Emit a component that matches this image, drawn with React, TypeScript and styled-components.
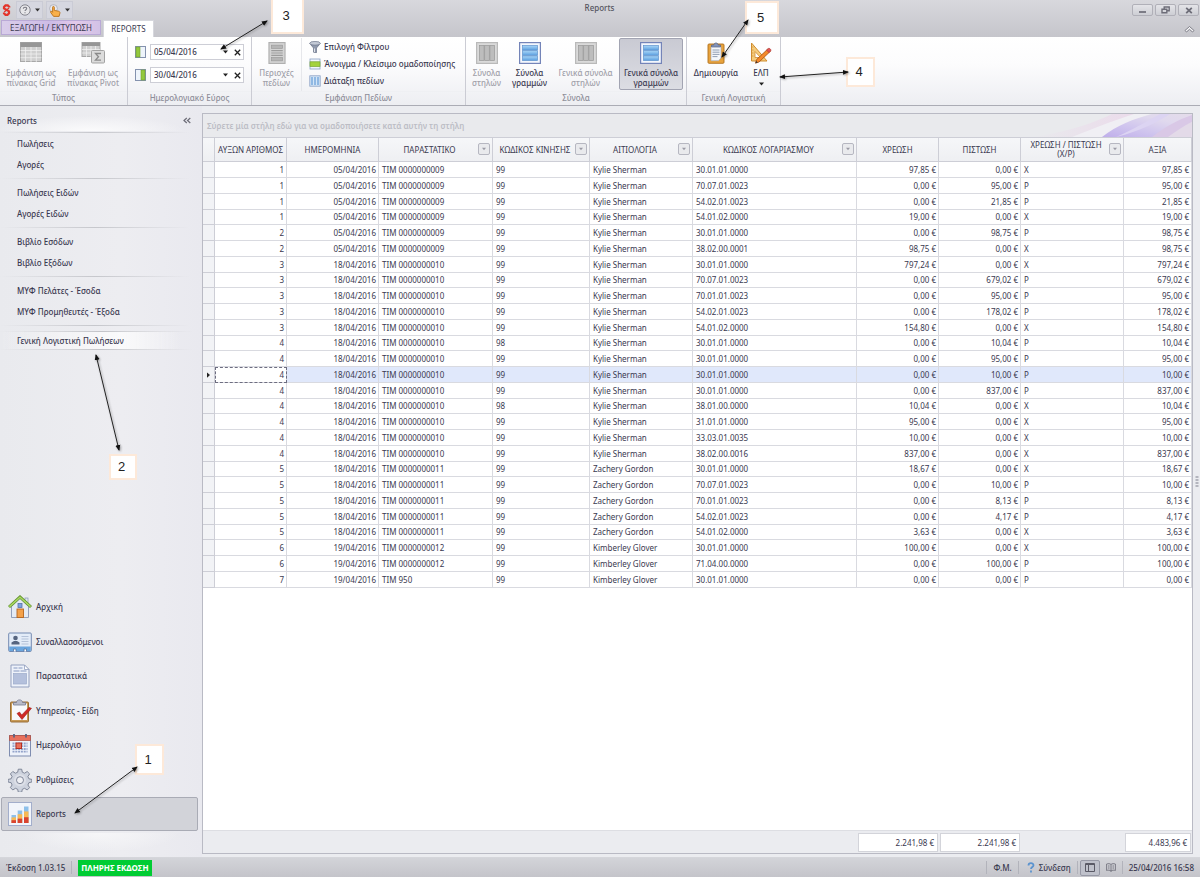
import React from 'react';
import styled, { createGlobalStyle, css } from 'styled-components';

const GlobalStyle = createGlobalStyle`
  *, *::before, *::after { box-sizing: border-box; }
  body {
    margin: 0;
    background: #ebecf0;
    color: #3a3950;
    font: 8px/10px "Noto Sans", "Open Sans", sans-serif;
  }
  button, input { font: inherit; color: inherit; }
  button { padding: 0; border: 0; background: none; cursor: pointer; }
  a { color: inherit; text-decoration: none; }
`;

/* ---------- frame ---------- */

const Page = styled.div`
  position: relative;
  display: flex;
  flex-direction: column;
  min-height: 100vh;
  overflow: hidden;
`;

const Header = styled.header`
  height: 37px;
  background: linear-gradient(#d8d8dd, #c5c5cb);
`;

const TitleBar = styled.div`
  display: grid;
  grid-template-columns: 1fr auto 1fr;
  align-items: center;
  height: 20px;
  padding: 0 1px 0 0;
`;

const QuickAccess = styled.div`
  display: flex;
  align-items: center;
  gap: 3px;
`;

const QuickButton = styled.button`
  display: flex;
  align-items: center;
  justify-content: center;
  gap: 4px;
  width: 27px;
  height: 18px;
  border: 1px solid #cacbd5;
  background: #d6d7e0;
`;

const Title = styled.h1`
  margin: 0;
  padding-bottom: 4px;
  font-size: 8px;
  font-weight: 500;
  color: #55555f;
`;

const WindowButtons = styled.div`
  display: flex;
  justify-content: flex-end;
  gap: 2px;
`;

const WindowButton = styled.button`
  display: grid;
  place-items: center;
  width: 21px;
  height: 12px;
  border: 1px solid #b0b0b8;
  border-radius: 2px;
  background: linear-gradient(#e4e4e8, #cdced4);
`;

const TabRow = styled.div`
  display: flex;
  align-items: flex-start;
  gap: 2px;
  height: 17px;
  padding: 0 4px 0 1px;
`;

const Tab = styled.button<{ $active?: boolean }>`
  height: 15px;
  width: 100px;
  font-size: 8px;
  border: 1px solid #b9a9d6;
  background: linear-gradient(90deg, #d9cdea, #cdbbe6 50%, #e3c9ea 75%, #d2c2e6);
  ${(p) =>
    p.$active &&
    css`
      width: 51px;
      height: 17px;
      border-color: #d6d7dd;
      border-bottom: 0;
      background: #fff;
    `}
`;

const CollapseRibbon = styled.button`
  margin: 5px 1px 0 auto;
  line-height: 0;
`;

/* ---------- ribbon ---------- */

const Ribbon = styled.div`
  display: flex;
  height: 69px;
  border-bottom: 1px solid #abacb5;
  background: linear-gradient(#fff, #fcfcfd 40%, #edeef2);
  font-weight: 500;
`;

const GroupBox = styled.section<{ $width: number }>`
  display: flex;
  flex-direction: column;
  width: ${(p) => p.$width}px;
  border-right: 1px solid #cbccd4;
`;

const GroupBody = styled.div`
  display: flex;
  flex: 1;
  padding-top: 1px;
`;

const GroupCaption = styled.h2`
  margin: 0;
  height: 14px;
  border-top: 1px solid #eff0f3;
  font-size: 8px;
  line-height: 12px;
  font-weight: 500;
  text-align: center;
  color: #8e8e99;
`;

const LargeButton = styled.button<{ $width: number; $active?: boolean }>`
  display: flex;
  flex-direction: column;
  align-items: center;
  gap: 4px;
  width: ${(p) => p.$width}px;
  height: 52px;
  padding-top: 3px;
  white-space: pre-line;
  border: 1px solid transparent;
  border-radius: 2px;
  &:disabled { color: #a0a0a9; cursor: default; }
  ${(p) =>
    p.$active &&
    css`
      border-color: #a2a4b2;
      background: linear-gradient(#c9cad3, #dcdde3);
    `}
`;

const DateFields = styled.div`
  display: flex;
  flex-direction: column;
  gap: 7px;
  padding: 6px 0 0 7px;
`;

const DateRow = styled.div`
  display: flex;
  align-items: center;
  gap: 4px;
  height: 16px;
`;

const DateBox = styled.div`
  display: flex;
  align-items: center;
  width: 94px;
  height: 16px;
  border: 1px solid #cdced6;
  background: #fff;
`;

const DateInput = styled.input`
  flex: 1;
  min-width: 0;
  padding: 0 0 0 3px;
  border: 0;
  outline: 0;
  background: none;
`;

const TinyButton = styled.button`
  display: grid;
  place-items: center;
  width: 12px;
  height: 14px;
`;

const CommandList = styled.div`
  display: flex;
  flex-direction: column;
  padding: 0 0 0 7px;
  border-left: 1px solid #e6e7eb;
`;

const Command = styled.button`
  display: flex;
  align-items: center;
  gap: 3px;
  height: 17px;
  white-space: nowrap;
`;

/* ---------- body ---------- */

const Workspace = styled.div`
  display: flex;
  flex: 1;
`;

const Sidebar = styled.aside`
  display: flex;
  flex-direction: column;
  width: 202px;
  padding: 7px 0 0;
  background: linear-gradient(90deg, #e9eaee, #ededf1 60%, #e9e9ef);
  font-weight: 500;
`;

const SidebarHeader = styled.div`
  display: flex;
  align-items: center;
  justify-content: space-between;
  height: 18px;
  padding: 0 11px 2px 7px;
  background: radial-gradient(ellipse at 45% 100%, #fbfbfc, transparent 60%);
`;

const SidebarTitle = styled.h2`
  margin: 0;
  font-size: 8px;
  font-weight: 500;
`;

const FadeRule = styled.hr<{ $slim?: boolean }>`
  width: 190px;
  height: ${(p) => (p.$slim ? 2 : 7)}px;
  margin: 0;
  border: 0;
  background: linear-gradient(90deg, transparent, #c6c7cc 50%, transparent) 0 50% / 100% 1px no-repeat;
`;

const ReportLink = styled.a<{ $active?: boolean }>`
  display: flex;
  align-items: center;
  height: 21px;
  padding-left: 17px;
  ${(p) =>
    p.$active &&
    css`
      height: 19px;
      margin-top: 2px;
      background: linear-gradient(90deg, transparent, #fafafb 60%, transparent 90%);
      border-top: 1px solid;
      border-bottom: 1px solid;
      border-image: linear-gradient(90deg, transparent, #c3c4c9 50%, transparent 95%) 1;
    `}
`;

const MainNav = styled.nav`
  display: flex;
  flex-direction: column;
  justify-content: space-between;
  height: 241px;
  margin: auto 4px 2px 1px;
`;

const NavItem = styled.a<{ $active?: boolean }>`
  display: flex;
  align-items: center;
  gap: 4px;
  height: 34px;
  padding-left: 6px;
  border: 1px solid transparent;
  border-radius: 2px;
  ${(p) =>
    p.$active &&
    css`
      border-color: #a9abb5;
      background: #d2d3d9;
    `}
`;

const SidebarFooter = styled.div`
  height: 24px;
  background: radial-gradient(ellipse at 50% 0, #f6f6f8, transparent 55%);
`;

const GridPanel = styled.main`
  display: flex;
  flex-direction: column;
  flex: 1;
  min-width: 0;
  margin: 7px 0 3px;
  border: 1px solid #b9bac4;
  background: #fff;
`;

const GroupByBar = styled.div`
  display: flex;
  align-items: center;
  justify-content: space-between;
  height: 23px;
  padding-left: 4px;
  background: #e9eaed;
  color: #bcbdc5;
  font-weight: 600;
`;

const Ribbons = styled.svg`
  width: 180px;
  height: 23px;
`;

const Table = styled.table`
  width: 100%;
  table-layout: fixed;
  border-collapse: separate;
  border-spacing: 0;
`;

const HeadRow = styled.tr`
  height: 25px;
  background: linear-gradient(#f6f7f9, #eeeff2);
`;

const HeadCell = styled.th`
  padding: 0 2px 1px;
  border: solid #cdced6;
  border-width: 1px 1px 1px 0;
  font-weight: 400;
  line-height: 9px;
`;

const HeadContent = styled.div`
  display: flex;
  align-items: center;
`;

const HeadLabel = styled.span`
  flex: 1;
  white-space: pre-line;
`;

const FilterButton = styled.button`
  display: grid;
  place-items: center;
  flex: none;
  width: 12px;
  height: 12px;
  border: 1px solid #b6b7c1;
  border-radius: 2px;
  background: #e9eaed;
`;

const Row = styled.tr<{ $selected?: boolean }>`
  height: 16px;
  &:nth-child(4n) { height: 15px; }
  ${(p) => p.$selected && css`background: #e0e8fb;`}
`;

const Cell = styled.td<{ $right?: boolean; $focused?: boolean }>`
  padding: 0 2px 0 3px;
  border: solid #d9dae0;
  border-width: 0 1px 1px 0;
  line-height: 10px;
  white-space: nowrap;
  text-align: ${(p) => (p.$right ? 'right' : 'left')};
  ${(p) =>
    p.$focused &&
    css`
      background: #fff;
      outline: 1px dashed #6d6d80;
      outline-offset: -1px;
    `}
`;

const IndicatorCell = styled.th`
  padding: 0;
  border: solid #cdced6;
  border-width: 0 1px 1px 0;
  background: #f2f3f6;
  line-height: 0;
`;

const Summary = styled.div`
  margin-top: auto;
  border-top: 1px solid #dddee3;
  background: #ebecf0;
`;

const SummaryCell = styled.td`
  height: 22px;
  padding: 1px 1px 0;
`;

const Total = styled.output`
  display: block;
  height: 19px;
  padding-right: 3px;
  border: 1px solid #d3d4da;
  background: #fff;
  line-height: 17px;
  text-align: right;
`;

const Splitter = styled.div`
  display: grid;
  place-items: center;
  width: 7px;
`;

/* ---------- status bar ---------- */

const StatusBar = styled.footer`
  display: flex;
  align-items: center;
  height: 20px;
  padding: 0 6px;
  border-top: 1px solid #d5d6db;
  background: linear-gradient(#d3d4d9, #c4c4ca);
  font-weight: 500;
`;

const Edition = styled.strong`
  margin-right: auto;
  padding: 0 3px;
  background: #00cc33;
  color: #fff;
  font-weight: 700;
  line-height: 16px;
`;

const Divider = styled.span<{ $before?: number; $after?: number }>`
  width: 1px;
  height: 13px;
  margin: 0 ${(p) => p.$after ?? 6}px 0 ${(p) => p.$before ?? 6}px;
  background: #b2b3bb;
`;

const StatusButton = styled.button<{ $active?: boolean }>`
  display: flex;
  align-items: center;
  justify-content: center;
  gap: 4px;
  min-width: 20px;
  height: 16px;
  padding-left: 2px;
  ${(p) =>
    p.$active &&
    css`
      padding: 0;
      border: 1px solid #9799a6;
      border-radius: 2px;
      background: #bfc1cb;
    `}
`;

/* ---------- annotations ---------- */

const Arrows = styled.svg`
  position: absolute;
  inset: 0;
  width: 1200px;
  height: 877px;
  pointer-events: none;
  filter: drop-shadow(1px 1px 1px rgba(0, 0, 0, 0.35));
`;

const Callout = styled.div<{ $x: number; $y: number; $w: number; $h: number }>`
  position: absolute;
  left: ${(p) => p.$x}px;
  top: ${(p) => p.$y}px;
  width: ${(p) => p.$w}px;
  height: ${(p) => p.$h}px;
  display: grid;
  place-items: center;
  padding: 0 3px 0 0;
  border: 2px solid #fde9d9;
  background: #fff;
  color: #222;
  font: 13px/14px "Liberation Sans", sans-serif;
`;

/* ---------- icons ---------- */

const Caret = ({ size = 5, color = '#333' }: { size?: number; color?: string }) => (
  <svg width={size} height="4" viewBox="0 0 5 4" aria-hidden="true"><path d="M0 .5h5L2.500 3.500z" fill={color} /></svg>
);

const CrossIcon = () => (
  <svg width="7" height="7" viewBox="0 0 7 7" aria-hidden="true"><path d="M.800.8l5.400 5.400M6.200.8L.8 6.200" stroke="#222" strokeWidth="1.300" /></svg>
);

const LogoIcon = () => (
  <svg width="13" height="14" viewBox="0 0 13 14" aria-hidden="true">
    <path d="M9.300 4.600V4L7.800 2.400H5.500L4 4v1.400L9 8.300v1.900l-1.500 1.600H5.500L4 10.200v-.8" fill="none" stroke="#e3352b" strokeWidth="2.200" />
    <path d="M9 5L4.200 9" stroke="#e3352b" strokeWidth="1.300" />
  </svg>
);

const HelpIcon = () => (
  <svg width="12" height="12" viewBox="0 0 12 12" fill="none" stroke="#7b7b84" aria-hidden="true">
    <circle cx="6" cy="6" r="5.200" fill="#e6e6e9" strokeWidth=".9" />
    <path d="M4.300 4.800c0-2.100 3.400-2.100 3.400-.2C7.700 5.700 6 5.700 6 7.100M6 8.200v1.100" strokeWidth="1.100" />
  </svg>
);

const HandIcon = () => (
  <svg width="12" height="13" viewBox="0 0 12 13" aria-hidden="true">
    <circle cx="4.500" cy="4.500" r="3.900" fill="#e9eaf0" stroke="#a6a8b4" strokeWidth=".8" />
    <path d="M3.600 3.200c0-1.100 1.700-1.100 1.700 0v3.200l4.200.8c1.300.3 1.600 1.100 1.400 2l-.8 3.200H4.600L1.700 8.500c-.6-1.100.4-1.700 1.100-1l.8.800z" fill="#f9b04a" stroke="#b9701a" strokeWidth=".9" />
  </svg>
);

const TableIcon = ({ sigma }: { sigma?: boolean }) => (
  <svg width="24" height="22" viewBox="0 0 24 22" aria-hidden="true">
    <rect x={sigma ? 1 : 1.500} y=".5" width={sigma ? 18 : 21} height={sigma ? 14 : 19} fill="#cfcfcf" stroke="#a8a8a8" />
    <path d={sigma ? 'M1 .5h18v3.500H1z' : 'M1.500 .5h21V5h-21z'} fill="#969696" />
    {sigma ? (
      <>
        <path d="M1 7.500h18M1 11h18M5.500 4v11M10 4v11M14.500 4v11" stroke="#f4f4f4" strokeWidth=".7" />
        <rect x="10.500" y="8.500" width="13" height="12.500" rx="1" fill="#dcdcdc" stroke="#a3a3a3" />
        <path d="M20 11.500h-5.500l3 3.300-3 3.300H20" fill="none" stroke="#8a8a8a" strokeWidth="1.300" />
      </>
    ) : (
      <path d="M1.500 8.500h21M1.500 12h21M1.500 15.700h21M6.500 5v15M12 5v15M17.300 5v15" stroke="#f4f4f4" strokeWidth=".7" />
    )}
  </svg>
);

const BarsIcon = ({ vertical, blue }: { vertical?: boolean; blue?: boolean }) => (
  <svg width="22" height="22" viewBox="0 0 22 22" aria-hidden="true">
    <defs>
      <linearGradient id="bar-blue" x2="0" y2="1">
        <stop offset="0" stopColor="#a9d6f7" />
        <stop offset="1" stopColor="#5b9fe0" />
      </linearGradient>
    </defs>
    <rect x=".6" y=".6" width="20.800" height="20.800" fill={blue ? '#f3f7fd' : '#dadada'} stroke={blue ? '#7484b8' : '#b9b9b9'} strokeWidth="1.200" />
    {[0, 1, 2].map((i) => (
      <rect
        key={i}
        x={vertical ? 3.500 + i * 5.200 : 3.500}
        y={vertical ? 3.500 : 3.500 + i * 5.200}
        width={vertical ? 4.600 : 15}
        height={vertical ? 15 : 4.600}
        fill={blue ? 'url(#bar-blue)' : '#bdbdbd'}
        stroke={blue ? '#5f92cc' : '#979797'}
        strokeWidth=".7"
      />
    ))}
  </svg>
);

const RegionsIcon = () => (
  <svg width="18" height="22" viewBox="0 0 18 23" aria-hidden="true">
    <rect x=".6" y=".6" width="16.800" height="21.800" fill="#d4d4d4" stroke="#b0b0b0" strokeWidth="1.200" />
    <rect x="3.300" y="3.300" width="11.400" height="3.400" fill="#b5b5b5" stroke="#999" strokeWidth=".7" />
    <path d="M3 9h12M3 11.500h12M3 14h12" stroke="#9c9c9c" strokeWidth="1.300" />
    <rect x="3.300" y="16.300" width="11.400" height="3.400" fill="#b5b5b5" stroke="#999" strokeWidth=".7" />
  </svg>
);

const PeriodIcon = ({ end }: { end?: boolean }) => (
  <svg width="11" height="12" viewBox="0 0 11 12" aria-hidden="true">
    <rect x=".5" y=".5" width="10" height="11" fill="#eef4fb" stroke="#8492ae" />
    <rect x={end ? 6 : 1} y="1" width="4" height="10" fill="#94c93d" stroke="#6f9e2c" strokeWidth=".6" />
  </svg>
);

const FunnelIcon = () => (
  <svg width="12" height="12" viewBox="0 0 12 12" aria-hidden="true">
    <path d="M.8 2.500L4.500 7v4.200l3 .5V7l3.700-4.500z" fill="#9099ad" stroke="#6a7388" strokeWidth=".7" />
    <path d="M5 7.500h1v3.500H5z" fill="#dfe3ea" />
    <ellipse cx="6" cy="2.300" rx="5.300" ry="1.900" fill="#c4cad6" stroke="#6a7388" strokeWidth=".7" />
  </svg>
);

const GroupingIcon = () => (
  <svg width="12" height="12" viewBox="0 0 12 12" aria-hidden="true">
    <rect x="1" y="1" width="10" height="10" fill="#f1f6fc" stroke="#8ba0c4" strokeWidth=".8" />
    <rect x="1" y="3.800" width="10" height="4.600" fill="#a4d23c" stroke="#76a52c" strokeWidth=".7" />
  </svg>
);

const FieldLayoutIcon = () => (
  <svg width="12" height="12" viewBox="0 0 12 12" aria-hidden="true">
    <rect x=".8" y=".8" width="10.400" height="10.400" fill="#d3e5f7" stroke="#8ba0c4" strokeWidth=".8" />
    <path d="M3 2v8M6 2v8M9 2v8" stroke="#7fadde" strokeWidth="1.600" />
  </svg>
);

const ClipboardIcon = () => (
  <svg width="18" height="22" viewBox="0 0 18 22" aria-hidden="true">
    <rect x="1" y="2" width="16" height="19.300" rx="1" fill="#e8a33d" stroke="#b0701c" strokeWidth=".9" />
    <path d="M4 4.500h10V16l-2.500 2.700H4z" fill="#f5f7fb" stroke="#9da6b8" strokeWidth=".6" />
    <path d="M5.500 8h7M5.500 10.200h7M5.500 12.400h7M5.500 14.600h5" stroke="#8793ac" strokeWidth=".9" />
    <path d="M4.500 5V3h2.300C7 .3 11 .3 11.200 3h2.300v2z" fill="#8393b8" stroke="#566487" strokeWidth=".7" />
  </svg>
);

const RulerIcon = () => (
  <svg width="22" height="22" viewBox="0 0 22 22" aria-hidden="true">
    <path d="M1.500 1v18H17z" fill="#f6cc7c" stroke="#cf8d30" />
    <path d="M5 9.500v6h5.500z" fill="#fff" stroke="#cf8d30" strokeWidth=".8" />
    <path d="M2 5h1.500M2 8h1.500M2 11h1.500M2 14h1.500" stroke="#cf8d30" strokeWidth=".7" />
    <path d="M17.800 7l2.600 2.300L9 20l-3.500 1.200 1-3.500z" fill="#f58a2a" stroke="#a34f12" strokeWidth=".8" />
    <path d="M16.500 8.200l1.800-1.800c.8-.8 3.400 1.300 2.500 2.400l-1.700 1.800z" fill="#e25555" stroke="#a33" strokeWidth=".6" />
    <path d="M5.500 21.200l.7-2.200 1.600 1.400z" fill="#333" />
  </svg>
);

const HomeIcon = () => (
  <svg width="24" height="24" viewBox="0 0 24 24" aria-hidden="true">
    <rect x="17" y="3" width="3" height="6" fill="#dfe6f1" stroke="#8897b5" strokeWidth=".7" />
    <path d="M3.500 11.500L12 3.500l8.500 8v11h-17z" fill="#e4ebf6" stroke="#8897b5" strokeWidth=".9" />
    <path d="M1 12L12 2l11 10" fill="none" stroke="#5f8f2b" strokeWidth="3" />
    <path d="M1.400 11.700L12 2.200l10.600 9.500" fill="none" stroke="#a9d862" strokeWidth="1.600" />
    <rect x="10" y="8.500" width="4" height="4" fill="#7da2e0" stroke="#5873a8" strokeWidth=".8" />
    <rect x="9" y="14" width="6.500" height="8.500" fill="#f3a14b" stroke="#b5651d" strokeWidth=".9" />
  </svg>
);

const ContactsIcon = () => (
  <svg width="24" height="24" viewBox="0 0 24 24" aria-hidden="true">
    <rect x=".7" y="3" width="22.600" height="18.500" rx="1" fill="#e3ecf8" stroke="#7289b0" />
    <path d="M1.200 16.500h21.600V21H1.200z" fill="#6aa5dd" />
    <path d="M5.500 21.500v-2.500h2.500v2.500M16 21.500v-2.500h2.500v2.500" fill="#fff" stroke="#56749f" strokeWidth=".8" />
    <circle cx="7.500" cy="8" r="2.300" fill="#56657f" />
    <path d="M3.500 14.500v-2l2.500-1.500h3l2.500 1.500v2z" fill="#56657f" />
    <path d="M13.500 6.500h7M13.500 9h7M13.500 11.500h7M13.500 14h7" stroke="#b4c2d8" />
  </svg>
);

const DocumentIcon = () => (
  <svg width="24" height="24" viewBox="0 0 24 24" aria-hidden="true">
    <path d="M3 1h13.500L21 5.500V23H3z" fill="#eef2fa" stroke="#93a0bf" />
    <path d="M16.500 1v4.500H21z" fill="#fff" stroke="#93a0bf" strokeWidth=".8" />
    <path d="M5.500 4h4M10.500 4h4M5.500 7h6M12.500 7h6" stroke="#a9b6d3" strokeWidth="1.600" />
    <rect x="5.500" y="9.500" width="13" height="10.500" fill="#b4c0dc" stroke="#9dabcb" strokeWidth=".7" />
  </svg>
);

const ChecklistIcon = () => (
  <svg width="24" height="24" viewBox="0 0 24 24" aria-hidden="true">
    <rect x="2.500" y="3" width="18" height="20" rx="1" fill="#c89b58" stroke="#93652a" strokeWidth=".9" />
    <path d="M4 4.500h15v16.500H4z" fill="#f7f8fb" />
    <path d="M5.500 6V3.500h3c0-3.500 6-3.500 6 0h3V6z" fill="#b8bbca" stroke="#777b90" strokeWidth=".8" />
    <path d="M9 14.500l2.500-1.500 2.200 3L21 8.500l2.500.8L14 20.500z" fill="#cf2a25" stroke="#9e1b18" strokeWidth=".6" />
  </svg>
);

const CalendarIcon = () => (
  <svg width="24" height="24" viewBox="0 0 24 24" aria-hidden="true">
    <rect x="1.500" y="2.500" width="21" height="20.500" fill="#eef2fa" stroke="#7f8db0" />
    <path d="M1.500 2.500h21V7.500h-21z" fill="#e8705c" stroke="#b04a3c" strokeWidth=".7" />
    <path d="M6 1v3.500M18 1v3.500" stroke="#596280" strokeWidth="1.800" />
    <path d="M4.500 10.500h15M4.500 13.200h15M4.500 16h15M4.500 18.700h15" stroke="#93a3ca" strokeWidth="1.800" strokeDasharray="2 .8" />
    <rect x="8" y="10" width="5.500" height="5.500" fill="#e8705c" stroke="#b42f22" />
  </svg>
);

const GearIcon = () => (
  <svg width="24" height="24" viewBox="0 0 24 24" aria-hidden="true">
    <path
      d="M10.300 1.200h3.400l.6 3 2.300 1 2.600-1.700 2.400 2.400-1.700 2.600 1 2.300 3 .6v2.600l-3 .7-1 2.300 1.700 2.600-2.400 2.400-2.600-1.700-2.300 1-.6 2.900h-3.400l-.6-2.900-2.300-1-2.600 1.700-2.400-2.400 1.700-2.600-1-2.300-3-.7v-2.600l3-.6 1-2.300-1.700-2.600 2.400-2.400 2.600 1.700 2.300-1z"
      fill="#ced3de"
      stroke="#757d90"
      strokeWidth=".9"
    />
    <circle cx="12" cy="12.200" r="6" fill="#dde0e8" />
    <circle cx="12" cy="12.200" r="3.500" fill="#f0f1f5" stroke="#757d90" strokeWidth=".9" />
  </svg>
);

const ChartIcon = () => (
  <svg width="24" height="24" viewBox="0 0 24 24" aria-hidden="true">
    <rect x=".5" y=".5" width="23" height="23" fill="#f2f5fb" stroke="#a3aecb" />
    {[[3.500, 13], [9.700, 8.500], [16, 4.500]].map(([x, y]) => (
      <g key={x}>
        <rect x={x} y={y} width="4.500" height={21 - y} fill="#8dc0ea" />
        <rect x={x} y={y + (21 - y) * 0.3} width="4.500" height={(21 - y) * 0.7} fill="#f7b955" />
        <rect x={x} y={y + (21 - y) * 0.65} width="4.500" height={(21 - y) * 0.35} fill="#d9432f" />
      </g>
    ))}
  </svg>
);

const ChevronsLeft = () => (
  <svg width="8" height="7" viewBox="0 0 8 7" fill="none" stroke="#6d6d78" aria-hidden="true"><path d="M3.800 1L1 3.500 3.800 6M7.300 1L4.500 3.500 7.300 6" strokeWidth="1.200" /></svg>
);

/* ---------- data ---------- */

type Entry = [string, string, string, string, string, string, string, string, string, string];

const D5 = '05/04/2016', D18 = '18/04/2016', D19 = '19/04/2016';
const T9 = 'ΤΙΜ 0000000009', T10 = 'ΤΙΜ 0000000010', T11 = 'ΤΙΜ 0000000011', T12 = 'ΤΙΜ 0000000012';
const KS = 'Kylie Sherman', ZG = 'Zachery Gordon', KG = 'Kimberley Glover';

const entries: Entry[] = [
  ['1', D5, T9, '99', KS, '30.01.01.0000', '97,85', '0,00', 'Χ', '97,85'],
  ['1', D5, T9, '99', KS, '70.07.01.0023', '0,00', '95,00', 'Ρ', '95,00'],
  ['1', D5, T9, '99', KS, '54.02.01.0023', '0,00', '21,85', 'Ρ', '21,85'],
  ['1', D5, T9, '99', KS, '54.01.02.0000', '19,00', '0,00', 'Χ', '19,00'],
  ['2', D5, T9, '99', KS, '30.01.01.0000', '0,00', '98,75', 'Ρ', '98,75'],
  ['2', D5, T9, '99', KS, '38.02.00.0001', '98,75', '0,00', 'Χ', '98,75'],
  ['3', D18, T10, '99', KS, '30.01.01.0000', '797,24', '0,00', 'Χ', '797,24'],
  ['3', D18, T10, '99', KS, '70.07.01.0023', '0,00', '679,02', 'Ρ', '679,02'],
  ['3', D18, T10, '99', KS, '70.01.01.0023', '0,00', '95,00', 'Ρ', '95,00'],
  ['3', D18, T10, '99', KS, '54.02.01.0023', '0,00', '178,02', 'Ρ', '178,02'],
  ['3', D18, T10, '99', KS, '54.01.02.0000', '154,80', '0,00', 'Χ', '154,80'],
  ['4', D18, T10, '98', KS, '30.01.01.0000', '0,00', '10,04', 'Ρ', '10,04'],
  ['4', D18, T10, '99', KS, '30.01.01.0000', '0,00', '95,00', 'Ρ', '95,00'],
  ['4', D18, T10, '99', KS, '30.01.01.0000', '0,00', '10,00', 'Ρ', '10,00'],
  ['4', D18, T10, '99', KS, '30.01.01.0000', '0,00', '837,00', 'Ρ', '837,00'],
  ['4', D18, T10, '98', KS, '38.01.00.0000', '10,04', '0,00', 'Χ', '10,04'],
  ['4', D18, T10, '99', KS, '31.01.01.0000', '95,00', '0,00', 'Χ', '95,00'],
  ['4', D18, T10, '99', KS, '33.03.01.0035', '10,00', '0,00', 'Χ', '10,00'],
  ['4', D18, T10, '99', KS, '38.02.00.0016', '837,00', '0,00', 'Χ', '837,00'],
  ['5', D18, T11, '99', ZG, '30.01.01.0000', '18,67', '0,00', 'Χ', '18,67'],
  ['5', D18, T11, '99', ZG, '70.07.01.0023', '0,00', '10,00', 'Ρ', '10,00'],
  ['5', D18, T11, '99', ZG, '70.01.01.0023', '0,00', '8,13', 'Ρ', '8,13'],
  ['5', D18, T11, '99', ZG, '54.02.01.0023', '0,00', '4,17', 'Ρ', '4,17'],
  ['5', D18, T11, '99', ZG, '54.01.02.0000', '3,63', '0,00', 'Χ', '3,63'],
  ['6', D19, T12, '99', KG, '30.01.01.0000', '100,00', '0,00', 'Χ', '100,00'],
  ['6', D19, T12, '99', KG, '71.04.00.0000', '0,00', '100,00', 'Ρ', '100,00'],
  ['7', D19, 'ΤΙΜ 950', '99', KG, '30.01.01.0000', '0,00', '0,00', 'Ρ', '0,00'],
];

const selectedRow = 13;

interface Column { label: string; width: number; right?: boolean; filter?: boolean; money?: boolean; total?: string }

const columns: Column[] = [
  { label: 'ΑΥΞΩΝ ΑΡΙΘΜΟΣ', width: 72, right: true },
  { label: 'ΗΜΕΡΟΜΗΝΙΑ', width: 92, right: true },
  { label: 'ΠΑΡΑΣΤΑΤΙΚΟ', width: 114, filter: true },
  { label: 'ΚΩΔΙΚΟΣ ΚΙΝΗΣΗΣ', width: 97, filter: true },
  { label: 'ΑΙΤΙΟΛΟΓΙΑ', width: 103, filter: true },
  { label: 'ΚΩΔΙΚΟΣ ΛΟΓΑΡΙΑΣΜΟΥ', width: 164, filter: true },
  { label: 'ΧΡΕΩΣΗ', width: 82, right: true, money: true, total: '2.241,98 €' },
  { label: 'ΠΙΣΤΩΣΗ', width: 82, right: true, money: true, total: '2.241,98 €' },
  { label: 'ΧΡΕΩΣΗ / ΠΙΣΤΩΣΗ\n(Χ/Ρ)', width: 103, filter: true },
  { label: 'ΑΞΙΑ', width: 68, right: true, money: true, total: '4.483,96 €' },
];

const reportGroups = [
  ['Πωλήσεις', 'Αγορές'],
  ['Πωλήσεις Ειδών', 'Αγορές Ειδών'],
  ['Βιβλίο Εσόδων', 'Βιβλίο Εξόδων'],
  ['ΜΥΦ Πελάτες - Έσοδα', 'ΜΥΦ Προμηθευτές - Έξοδα'],
];

const sections = [
  { label: 'Αρχική', icon: <HomeIcon /> },
  { label: 'Συναλλασσόμενοι', icon: <ContactsIcon /> },
  { label: 'Παραστατικά', icon: <DocumentIcon /> },
  { label: 'Υπηρεσίες - Είδη', icon: <ChecklistIcon /> },
  { label: 'Ημερολόγιο', icon: <CalendarIcon /> },
  { label: 'Ρυθμίσεις', icon: <GearIcon /> },
  { label: 'Reports', icon: <ChartIcon />, active: true },
];

const callouts = [
  { n: 1, x: 135, y: 744, w: 29, h: 31 },
  { n: 2, x: 109, y: 454, w: 28, h: 26 },
  { n: 3, x: 271, y: -2, w: 33, h: 36 },
  { n: 4, x: 846, y: 57, w: 29, h: 30 },
  { n: 5, x: 745, y: 1, w: 34, h: 33 },
];

const arrows = [
  'M75 813L137 767',
  'M96 355L119 450',
  'M221 49L267 21',
  'M780 77L848 72',
  'M722 57L748 20',
];

/* ---------- parts ---------- */

const ColGroup = () => (
  <colgroup>
    <col style={{ width: 12 }} />
    {columns.map((c) => <col key={c.label} style={{ width: c.width }} />)}
  </colgroup>
);

const Group = ({ title, width, children }: { title: string; width: number; children: React.ReactNode }) => (
  <GroupBox $width={width}>
    <GroupBody>{children}</GroupBody>
    <GroupCaption>{title}</GroupCaption>
  </GroupBox>
);

const DateField = ({ label, value, end }: { label: string; value: string; end?: boolean }) => (
  <DateRow>
    <PeriodIcon end={end} />
    <DateBox>
      <DateInput aria-label={label} defaultValue={value} />
      <TinyButton aria-label="Επιλογή ημερομηνίας"><Caret color="#222" /></TinyButton>
      <TinyButton aria-label="Καθαρισμός"><CrossIcon /></TinyButton>
    </DateBox>
  </DateRow>
);

const DataGrid = () => (
  <Table>
    <ColGroup />
    <thead>
      <HeadRow>
        <HeadCell aria-label="Δείκτης" />
        {columns.map((c) => (
          <HeadCell key={c.label} scope="col">
            <HeadContent>
              <HeadLabel>{c.label}</HeadLabel>
              {c.filter && <FilterButton aria-label={`Φίλτρο ${c.label}`}><Caret size={4} color="#9a9aa5" /></FilterButton>}
            </HeadContent>
          </HeadCell>
        ))}
      </HeadRow>
    </thead>
    <tbody>
      {entries.map((entry, r) => (
        <Row key={r} $selected={r === selectedRow}>
          <IndicatorCell scope="row">
            {r === selectedRow && <svg width="3" height="6" viewBox="0 0 4 7" aria-hidden="true"><path d="M0 0l4 3.500L0 7z" fill="#222" /></svg>}
          </IndicatorCell>
          {entry.map((value, i) => (
            <Cell key={i} $right={columns[i].right} $focused={r === selectedRow && i === 0}>
              {columns[i].money ? `${value} €` : value}
            </Cell>
          ))}
        </Row>
      ))}
    </tbody>
  </Table>
);

export default function App() {
  return (
    <Page>
      <GlobalStyle />
      <Header>
        <TitleBar>
          <QuickAccess>
            <LogoIcon />
            <QuickButton aria-label="Βοήθεια"><HelpIcon /><Caret /></QuickButton>
            <QuickButton aria-label="Λειτουργία αφής"><HandIcon /><Caret /></QuickButton>
          </QuickAccess>
          <Title>Reports</Title>
          <WindowButtons>
            <WindowButton aria-label="Ελαχιστοποίηση">
              <svg width="9" height="8" viewBox="0 0 9 8"><path d="M1 6h7" stroke="#7c7c86" strokeWidth="2" /></svg>
            </WindowButton>
            <WindowButton aria-label="Επαναφορά">
              <svg width="9" height="8" viewBox="0 0 9 8" fill="none" stroke="#6d6d78" strokeWidth="1.400"><path d="M3.200 2.500V1h5v3.700H6.500M1 3.300h4.800v3.500H1z" /></svg>
            </WindowButton>
            <WindowButton aria-label="Κλείσιμο">
              <svg width="8" height="7" viewBox="0 0 8 7"><path d="M1.200.8l5.600 5.400M6.800.8L1.200 6.200" stroke="#6d6d78" strokeWidth="1.800" /></svg>
            </WindowButton>
          </WindowButtons>
        </TitleBar>
        <TabRow>
          <Tab>ΕΞΑΓΩΓΗ / ΕΚΤΥΠΩΣΗ</Tab>
          <Tab $active>REPORTS</Tab>
          <CollapseRibbon aria-label="Σύμπτυξη κορδέλας">
            <svg width="11" height="8" viewBox="0 0 11 8"><path d="M1 5.500l4.500-4 4.500 4-1.500 1.500-3-2.700-3 2.700z" fill="#f4f4f6" stroke="#73737d" strokeWidth=".9" /></svg>
          </CollapseRibbon>
        </TabRow>
      </Header>

      <Ribbon>
        <Group title="Τύπος" width={128}>
          <LargeButton $width={62} disabled><TableIcon />{'Εμφάνιση ως\nπίνακας Grid'}</LargeButton>
          <LargeButton $width={62} disabled><TableIcon sigma />{'Εμφάνιση ως\nπίνακας Pivot'}</LargeButton>
        </Group>
        <Group title="Ημερολογιακό Εύρος" width={124}>
          <DateFields>
            <DateField label="Από" value="05/04/2016" />
            <DateField label="Έως" value="30/04/2016" end />
          </DateFields>
        </Group>
        <Group title="Εμφάνιση Πεδίων" width={214}>
          <LargeButton $width={49} disabled><RegionsIcon />{'Περιοχές\nπεδίων'}</LargeButton>
          <CommandList>
            <Command><FunnelIcon />Επιλογή Φίλτρου</Command>
            <Command><GroupingIcon />Άνοιγμα / Κλείσιμο ομαδοποίησης</Command>
            <Command><FieldLayoutIcon />Διάταξη πεδίων</Command>
          </CommandList>
        </Group>
        <Group title="Σύνολα" width={221}>
          <LargeButton $width={41} disabled><BarsIcon vertical />{'Σύνολα\nστηλών'}</LargeButton>
          <LargeButton $width={45}><BarsIcon blue />{'Σύνολα\nγραμμών'}</LargeButton>
          <LargeButton $width={67} disabled><BarsIcon vertical />{'Γενικά σύνολα\nστηλών'}</LargeButton>
          <LargeButton $width={64} $active><BarsIcon blue />{'Γενικά σύνολα\nγραμμών'}</LargeButton>
        </Group>
        <Group title="Γενική Λογιστική" width={94}>
          <LargeButton $width={58}><ClipboardIcon />Δημιουργία</LargeButton>
          <LargeButton $width={32}><RulerIcon />ΕΛΠ<Caret color="#222" /></LargeButton>
        </Group>
      </Ribbon>

      <Workspace>
        <Sidebar>
          <SidebarHeader>
            <SidebarTitle>Reports</SidebarTitle>
            <button aria-label="Σύμπτυξη"><ChevronsLeft /></button>
          </SidebarHeader>
          {reportGroups.map((group, i) => (
            <React.Fragment key={group[0]}>
              <FadeRule $slim={i === 0} />
              {group.map((label) => <ReportLink key={label} href="#">{label}</ReportLink>)}
            </React.Fragment>
          ))}
          <FadeRule />
          <ReportLink href="#" $active>Γενική Λογιστική Πωλήσεων</ReportLink>
          <MainNav>
            {sections.map((s) => <NavItem key={s.label} href="#" $active={s.active}>{s.icon}{s.label}</NavItem>)}
          </MainNav>
          <SidebarFooter />
        </Sidebar>

        <GridPanel>
          <GroupByBar>
            Σύρετε μία στήλη εδώ για να ομαδοποιήσετε κατά αυτήν τη στήλη
            <Ribbons viewBox="0 0 180 24" preserveAspectRatio="none" aria-hidden="true">
              <defs>
                <linearGradient id="petal" x1="0" y1="1" x2="1" y2="0">
                  <stop offset="0" stopColor="#bfaeea" />
                  <stop offset=".35" stopColor="#cfc4ee" />
                  <stop offset=".7" stopColor="#e0d9ee" />
                  <stop offset="1" stopColor="#e4dcea" />
                </linearGradient>
                <linearGradient id="blush">
                  <stop offset="0" stopColor="#e9eaed" />
                  <stop offset="1" stopColor="#ecd4ea" />
                </linearGradient>
              </defs>
              <path d="M20 24C60 18 84 8 100 0h26C106 8 84 16 66 24z" fill="url(#blush)" opacity=".7" />
              <path d="M60 24C84 14 104 6 122 0h16C118 8 104 16 92 24z" fill="#f0eff4" />
              <path d="M90 24C104 12 122 5 140 0h40v24z" fill="url(#petal)" />
              <path d="M104 24C128 18 146 8 158 0h-10C134 8 118 18 104 24z" fill="#dcd4f2" />
              <path d="M140 24C152 14 166 6 180 1v23z" fill="#d9c8e6" />
              <path d="M156 24C164 18 172 12 180 8v16z" fill="#e3dae8" />
            </Ribbons>
          </GroupByBar>
          <DataGrid />
          <Summary>
            <Table>
              <ColGroup />
              <tbody>
                <tr>
                  <td />
                  {columns.map((c) => <SummaryCell key={c.label}>{c.total && <Total>{c.total}</Total>}</SummaryCell>)}
                </tr>
              </tbody>
            </Table>
          </Summary>
        </GridPanel>
        <Splitter>
          <svg width="4" height="12" viewBox="0 0 4 12" aria-hidden="true"><path d="M2 0v12" stroke="#b4b5be" strokeWidth="3" strokeDasharray="2 1" /></svg>
        </Splitter>
      </Workspace>

      <StatusBar>
        <span>Έκδοση 1.03.15</span>
        <Divider />
        <Edition>ΠΛΗΡΗΣ ΕΚΔΟΣΗ</Edition>
        <Divider />
        <span>Φ.Μ.</span>
        <Divider />
        <StatusButton>
          <svg width="8" height="11" viewBox="0 0 8 11" aria-hidden="true"><path d="M1.500 3.500c0-3 5-3 5-.3C6.500 5 4 5 4 7M4 8.500v2" fill="none" stroke="#5b93cf" strokeWidth="1.800" /></svg>
          Σύνδεση
        </StatusButton>
        <Divider $after={2} />
        <StatusButton $active aria-label="Προβολή πλαισίου">
          <svg width="10" height="9" viewBox="0 0 10 9" fill="none" stroke="#5a5a66"><path d="M.5.500h9v8h-9zM3.500 1v7.500M.5 1.500h9" /></svg>
        </StatusButton>
        <StatusButton aria-label="Προβολή ανάγνωσης">
          <svg width="10" height="9" viewBox="0 0 10 9" fill="none" stroke="#72727d" strokeWidth=".9"><path d="M5 1.500C4 .5 2 .5.600 1v6.500C2 7 4 7 5 8c1-1 3-1 4.400-.5V1C8 .5 6 .5 5 1.500V9M2 3h1.500M2 5h1.500M6.500 3H8M6.500 5H8" /></svg>
        </StatusButton>
        <Divider $before={2} />
        <span>25/04/2016 16:58</span>
      </StatusBar>

      {callouts.map((c) => <Callout key={c.n} $x={c.x} $y={c.y} $w={c.w} $h={c.h}>{c.n}</Callout>)}
      <Arrows viewBox="0 0 1200 877" aria-hidden="true">
        <defs>
          <marker id="head" viewBox="0 0 6 6" refX="5" refY="3" markerWidth="6" markerHeight="6" orient="auto-start-reverse">
            <path d="M0 .5L6 3 0 5.500z" fill="#111" />
          </marker>
        </defs>
        {arrows.map((d) => <path key={d} d={d} stroke="#222" strokeWidth="1" markerStart="url(#head)" markerEnd="url(#head)" />)}
      </Arrows>
    </Page>
  );
}
